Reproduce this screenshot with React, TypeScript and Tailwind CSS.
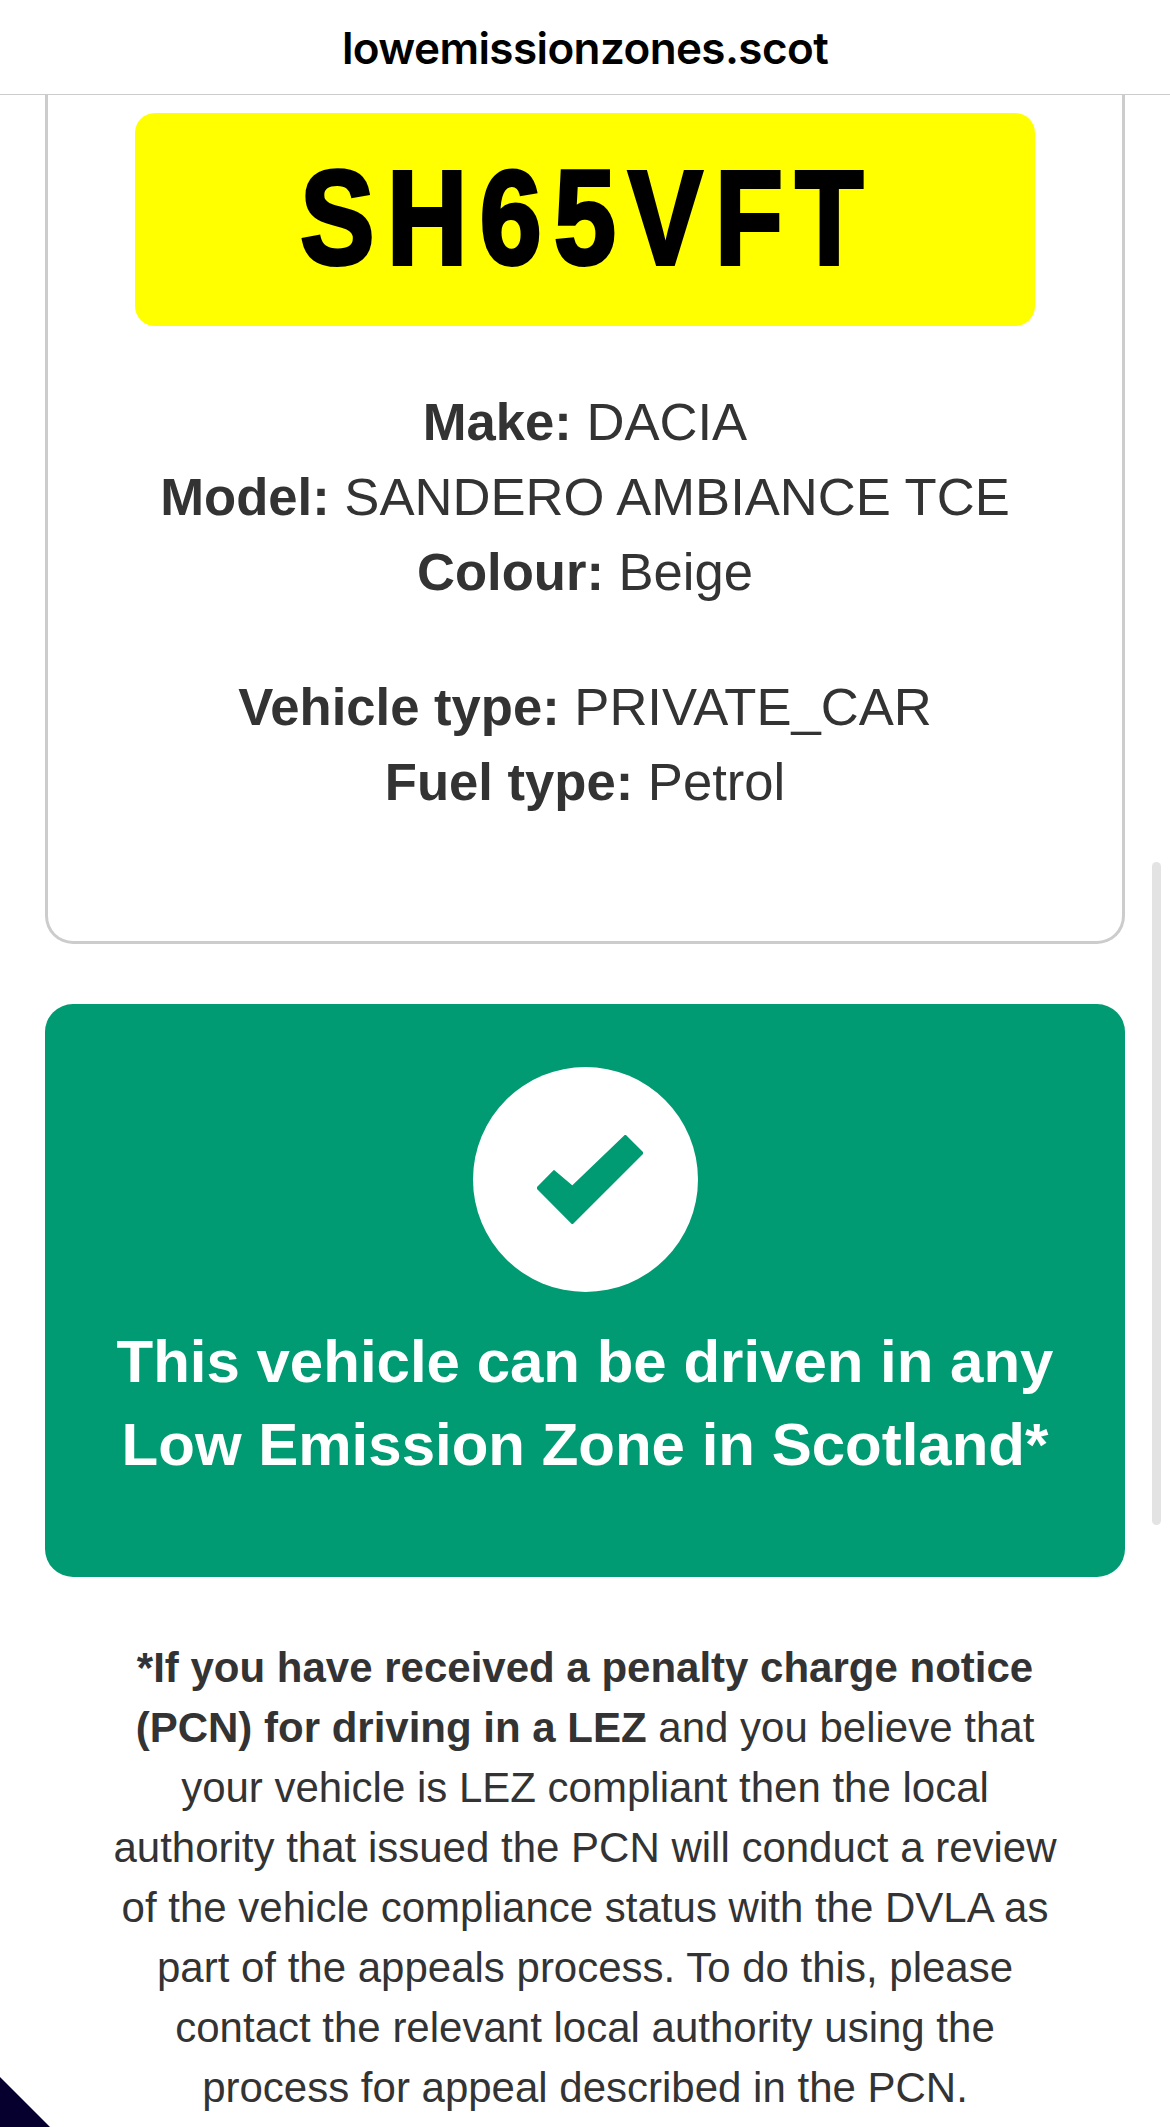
const facts = [
  [
    { label: 'Make:', value: 'DACIA' },
    { label: 'Model:', value: 'SANDERO AMBIANCE TCE' },
    { label: 'Colour:', value: 'Beige' },
  ],
  [
    { label: 'Vehicle type:', value: 'PRIVATE_CAR' },
    { label: 'Fuel type:', value: 'Petrol' },
  ],
];

export default function App() {
  return (
    <div className="relative h-[2127px] w-[1170px] overflow-hidden bg-white font-['Liberation_Sans',Arial,sans-serif] text-[#333]">
      {/* Browser address bar */}
      <header className="flex h-[95px] items-center justify-center border-b border-[#ccc] pt-[2px] font-['Inter',sans-serif] text-[44px] font-semibold tracking-[-0.6px] text-black">
        lowemissionzones.scot
      </header>

      {/* Vehicle details */}
      <section className="mx-[45px] h-[849px] rounded-b-[28px] border-x-[3px] border-b-[3px] border-[#ccc] pt-[18px]">
        <div className="mx-auto flex h-[213px] w-[900px] items-center justify-center rounded-[20px] bg-[#ffff00] pb-[4px]">
          <span className="inline-block scale-x-[0.83] pl-[8px] font-['Liberation_Sans',sans-serif] text-[134px] leading-none font-bold tracking-[15px] text-black [-webkit-text-stroke:4px_black]">
            SH65VFT
          </span>
        </div>
        <div className="mt-[58px] flex flex-col gap-[60px] text-center text-[52.6px] leading-[75px]">
          {facts.map((group, i) => (
            <div key={i}>
              {group.map((fact) => (
                <p key={fact.label}>
                  <strong className="font-bold">{fact.label}</strong> {fact.value}
                </p>
              ))}
            </div>
          ))}
        </div>
      </section>

      {/* Result banner */}
      <section className="mx-[45px] mt-[60px] flex h-[573px] flex-col items-center rounded-[28px] bg-[#019b73] pt-[63px] text-white">
        <div className="flex h-[225px] w-[225px] items-center justify-center rounded-full bg-white">
          <svg className="ml-[9px]" width="106" height="89" viewBox="0 0 318 265" fill="#019b73">
            <path d="M265 0 L318 53 L106 265 L0 158 L51 106 L106 153 Z" stroke="#019b73" strokeWidth="4" strokeLinejoin="round" />
          </svg>
        </div>
        <h2 className="mt-[28px] text-center text-[60px] leading-[83px] font-bold">
          This vehicle can be driven in any
          <br />
          Low Emission Zone in Scotland*
        </h2>
      </section>

      {/* Appeal note */}
      <p className="mx-auto mt-[61px] w-[1000px] text-center text-[42px] leading-[60px]">
        <strong className="font-bold">
          *If you have received a penalty charge notice
          <br />
          (PCN) for driving in a LEZ
        </strong>{' '}
        and you believe that
        <br />
        your vehicle is LEZ compliant then the local
        <br />
        authority that issued the PCN will conduct a review
        <br />
        of the vehicle compliance status with the DVLA as
        <br />
        part of the appeals process. To do this, please
        <br />
        contact the relevant local authority using the
        <br />
        process for appeal described in the PCN.
      </p>

      {/* Scrollbar */}
      <div className="absolute top-[862px] left-[1152px] h-[663px] w-[9px] rounded-full bg-[#e3e3e3]" />

      {/* Corner badge */}
      <svg className="absolute bottom-0 left-0" width="50" height="50" viewBox="0 0 50 50">
        <path d="M0 0 L50 50 L0 50 Z" fill="#05002e" />
      </svg>
    </div>
  );
}
